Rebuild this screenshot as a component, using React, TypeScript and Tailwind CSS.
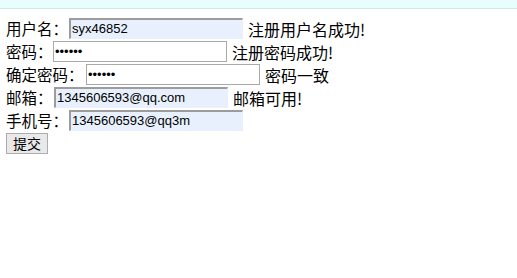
import React from "react"

const cn = '"Noto Sans CJK SC", "Liberation Sans", sans-serif'
const en = '"Liberation Sans", "Noto Sans CJK SC", sans-serif'

function Row({ label, labelW, value, kind, msg }: { label: string; labelW: string; value: string; kind: "auto" | "plain"; msg?: string }) {
  const box =
    kind === "auto"
      ? "bg-[#e8f0fe] border-t-2 border-l-2 border-t-[#9c9c9c] border-l-[#9c9c9c] border-b border-r border-b-[#e8f0fe] border-r-[#e8f0fe]"
      : "bg-white border border-[#a9a9a9]"
  return (
    <div className="flex items-center h-[23px]">
      <span className={`${labelW} shrink-0 text-[15.5px] text-black`} style={{ fontFamily: cn }}>{label}</span>
      <div className={`w-[174px] h-[21px] flex items-center pl-[1px] text-[13px] text-black ${box}`} style={{ fontFamily: en }}>
        {value}
      </div>
      {msg && <span className="ml-[5px] text-[16px] text-black" style={{ fontFamily: cn }}>{msg}</span>}
    </div>
  )
}

export default function App() {
  return (
    <div className="w-[517px] h-[278px] bg-white overflow-hidden">
      <div className="h-[9px] bg-[#e8fefe] border-b border-[#cde9e9]" />
      <div className="pl-[6px] pt-[8px] flex flex-col">
        <Row label="用户名：" labelW="w-[63px]" value="syx46852" kind="auto" msg="注册用户名成功!" />
        <Row label="密码：" labelW="w-[47px]" value="••••••" kind="plain" msg="注册密码成功!" />
        <Row label="确定密码：" labelW="w-[80px]" value="••••••" kind="plain" msg="密码一致" />
        <Row label="邮箱：" labelW="w-[48px]" value="1345606593@qq.com" kind="auto" msg="邮箱可用!" />
        <Row label="手机号：" labelW="w-[63px]" value="1345606593@qq3m" kind="auto" />
        <div className="pt-[1px]">
          <button className="w-[42px] h-[21px] bg-[#e9e9e9] border border-[#adadad] text-[14px] text-black flex items-center justify-center" style={{ fontFamily: cn }}>
            提交
          </button>
        </div>
      </div>
    </div>
  )
}
